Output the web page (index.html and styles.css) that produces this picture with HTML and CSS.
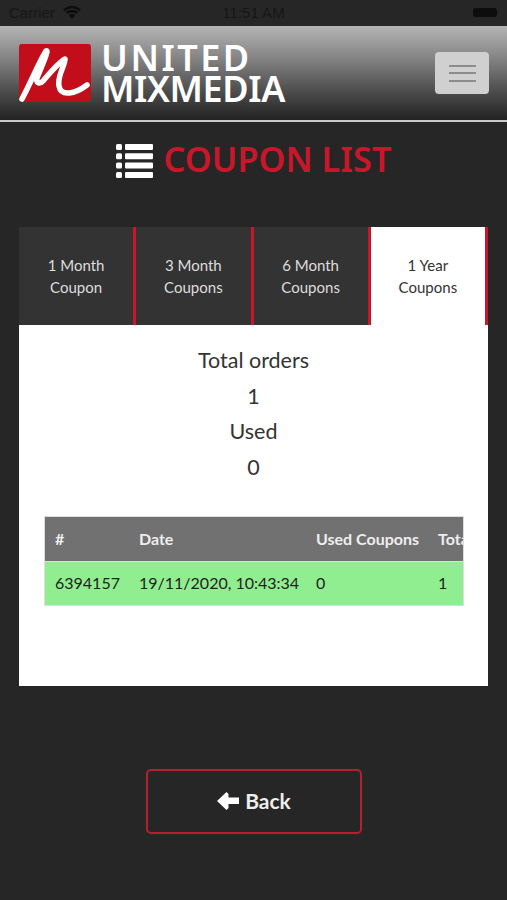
FILE: index.html
```html
<!DOCTYPE html>
<html>
<head>
  <meta charset="utf-8">
  <title>Coupon List</title>
  <link rel="stylesheet" href="styles.css">
</head>
<body>
  <div class="statusbar">
    <div class="status-left">
      <span>Carrier</span>
      <svg class="wifi" width="18" height="13" viewBox="0 0 18 13">
        <path d="M9 12.8 L5.8 9.2 A4.8 4.8 0 0 1 12.2 9.2 Z" fill="#0d0d0d"/>
        <path d="M3.8 7 A7.6 7.6 0 0 1 14.2 7" fill="none" stroke="#0d0d0d" stroke-width="2.4"/>
        <path d="M1 4.2 A11.6 11.6 0 0 1 17 4.2" fill="none" stroke="#0d0d0d" stroke-width="2.4"/>
      </svg>
    </div>
    <div class="status-time">11:51 AM</div>
    <div class="status-right"><div class="battery"></div></div>
  </div>

  <div class="topbar">
    <div class="logo">
      <svg class="logo-mark" width="72" height="58" viewBox="0 0 72 58">
        <rect x="0" y="0" width="72" height="58" rx="3" fill="#c20e1a"/>
        <path d="M3 55 C12 38 20 18 27 7 C31 4 22 24 18 34 C17 40 21 40 24 37 C30 30 40 18 46 15 C46 22 38 32 40 42 C42 53 56 50 68 41" fill="none" stroke="#fff" stroke-width="5.5" stroke-linecap="round" stroke-linejoin="round"/>
      </svg>
      <div class="logo-text">
        <div class="logo-line1">UNITED</div>
        <div class="logo-line2">MIXMEDIA</div>
      </div>
    </div>
    <div class="menu-btn">
      <span></span><span></span><span></span>
    </div>
  </div>

  <h1 class="page-title">
    <svg width="37" height="34" viewBox="0 0 37 34" fill="#fff">
      <rect x="0" y="0" width="6" height="6" rx="1.5"/><rect x="9" y="0" width="28" height="6" rx="1"/>
      <rect x="0" y="9.3" width="6" height="6" rx="1.5"/><rect x="9" y="9.3" width="28" height="6" rx="1"/>
      <rect x="0" y="18.6" width="6" height="6" rx="1.5"/><rect x="9" y="18.6" width="28" height="6" rx="1"/>
      <rect x="0" y="28" width="6" height="6" rx="1.5"/><rect x="9" y="28" width="28" height="6" rx="1"/>
    </svg>
    <span>COUPON LIST</span>
  </h1>

  <div class="card">
    <div class="tabs">
      <div class="tab">1 Month<br>Coupon</div>
      <div class="tab">3 Month<br>Coupons</div>
      <div class="tab">6 Month<br>Coupons</div>
      <div class="tab active">1 Year<br>Coupons</div>
    </div>
    <div class="panel">
      <div class="totals">
        <div>Total orders</div>
        <div>1</div>
        <div>Used</div>
        <div>0</div>
      </div>
      <div class="table-wrap">
        <table class="orders">
          <tr>
            <th class="col-id">#</th>
            <th class="col-date">Date</th>
            <th class="col-used">Used Coupons</th>
            <th class="col-total">Total</th>
          </tr>
          <tr>
            <td>6394157</td>
            <td>19/11/2020, 10:43:34</td>
            <td>0</td>
            <td>1</td>
          </tr>
        </table>
      </div>
    </div>
  </div>

  <div class="back-row">
    <a class="back-btn">
      <svg width="22" height="18" viewBox="0 0 22 18" fill="#fff">
        <path d="M0 9 L9.5 0 L11.5 2 L11.5 5.5 L22 5.5 L22 12 L11.5 12 L11.5 16 L9.5 18 Z"/>
      </svg>
      <span>Back</span>
    </a>
  </div>
</body>
</html>
```

FILE: styles.css
```css
html, body {
  margin: 0;
  padding: 0;
}
body {
  width: 507px;
  height: 900px;
  overflow: hidden;
  background-color: #262626;
  font-family: "Lato", "Noto Sans", sans-serif;
  color: #333;
}

/* status bar */
.statusbar {
  height: 25px;
  display: flex;
  align-items: center;
  justify-content: space-between;
  padding: 0 9px;
  font-family: "Liberation Sans", sans-serif;
  font-size: 15px;
  color: #161616;
  position: relative;
}
.status-left {
  display: flex;
  align-items: center;
  gap: 8px;
}
.status-time {
  position: absolute;
  left: 0;
  right: 0;
  text-align: center;
}
.battery {
  width: 24px;
  height: 9px;
  background-color: #0d0d0d;
  border-radius: 3px;
  margin-right: 1px;
}

/* header */
.topbar {
  height: 94px;
  margin-top: 1px;
  border-bottom: 2px solid #c9c9c9;
  background: linear-gradient(to bottom, #b4b4b4 0%, #8a8a8a 30%, #4c4c4c 70%, #222 100%);
  display: flex;
  align-items: center;
  justify-content: space-between;
  padding: 0 18px 0 19px;
}
.logo {
  display: flex;
  align-items: center;
  gap: 10px;
}
.logo-text {
  font-family: "Noto Sans", sans-serif;
  font-weight: 600;
  color: #fff;
  font-size: 36px;
  line-height: 31px;
}
.logo-line1 {
  letter-spacing: 2.5px;
}
.logo-line2 {
  letter-spacing: -0.4px;
}
.menu-btn {
  width: 54px;
  height: 42px;
  background-color: #d0d0d0;
  border-radius: 4px;
  display: flex;
  flex-direction: column;
  align-items: center;
  justify-content: center;
  gap: 5.5px;
}
.menu-btn span {
  width: 27px;
  height: 2px;
  background-color: #8c8c8c;
}

/* title */
.page-title {
  margin: 0;
  height: 76px;
  display: flex;
  align-items: center;
  justify-content: center;
  gap: 11px;
  font-family: "Noto Sans", sans-serif;
  font-weight: 600;
  font-size: 34.3px;
  color: #c8172a;
}
.page-title svg {
  margin-top: 2px;
}
.page-title span {
  margin-bottom: 4px;
}

/* tabs + panel */
.card {
  margin: 29px 19px 0;
  width: 469px;
}
.tabs {
  display: flex;
  height: 98px;
}
.tab {
  flex: 1;
  background-color: #333;
  border-right: 3px solid #c8172a;
  color: #ddd;
  font-size: 15px;
  line-height: 22px;
  text-align: center;
  display: flex;
  align-items: center;
  justify-content: center;
}
.tab.active {
  background-color: #fff;
  color: #333;
}
.panel {
  background-color: #fff;
  height: 361px;
  padding: 18px 25px 0;
  box-sizing: border-box;
}
.totals {
  text-align: center;
  font-size: 21.5px;
  line-height: 35.5px;
  color: #333;
}
.table-wrap {
  margin-top: 31px;
  width: 420px;
  box-sizing: border-box;
  border: 1px solid #ddd;
  border-bottom: 0;
  overflow: hidden;
}
.orders {
  border-collapse: collapse;
  table-layout: fixed;
  width: 470px;
  font-size: 16px;
  white-space: nowrap;
}
.orders th,
.orders td {
  box-sizing: border-box;
  height: 44px;
  padding: 0 0 1px 11px;
  border-bottom: 1px solid #ddd;
}
.orders th {
  background-color: #717171;
  color: #eee;
  font-weight: 700;
  text-align: left;
}
.orders td {
  background-color: #90ee90;
  color: #222;
}
.orders th:first-child,
.orders td:first-child {
  padding-left: 10px;
}
.col-id {
  width: 83px;
}
.col-date {
  width: 177px;
}
.col-used {
  width: 122px;
}
.col-total {
  width: 88px;
}

/* back */
.back-row {
  margin-top: 83px;
  display: flex;
  justify-content: center;
}
.back-btn {
  width: 216px;
  height: 65px;
  box-sizing: border-box;
  border: 2.5px solid #b3202f;
  border-radius: 5px;
  display: flex;
  align-items: center;
  justify-content: center;
  gap: 6px;
  padding: 0 0 2px 1px;
  color: #eee;
  font-weight: 700;
  font-size: 21px;
}
```
